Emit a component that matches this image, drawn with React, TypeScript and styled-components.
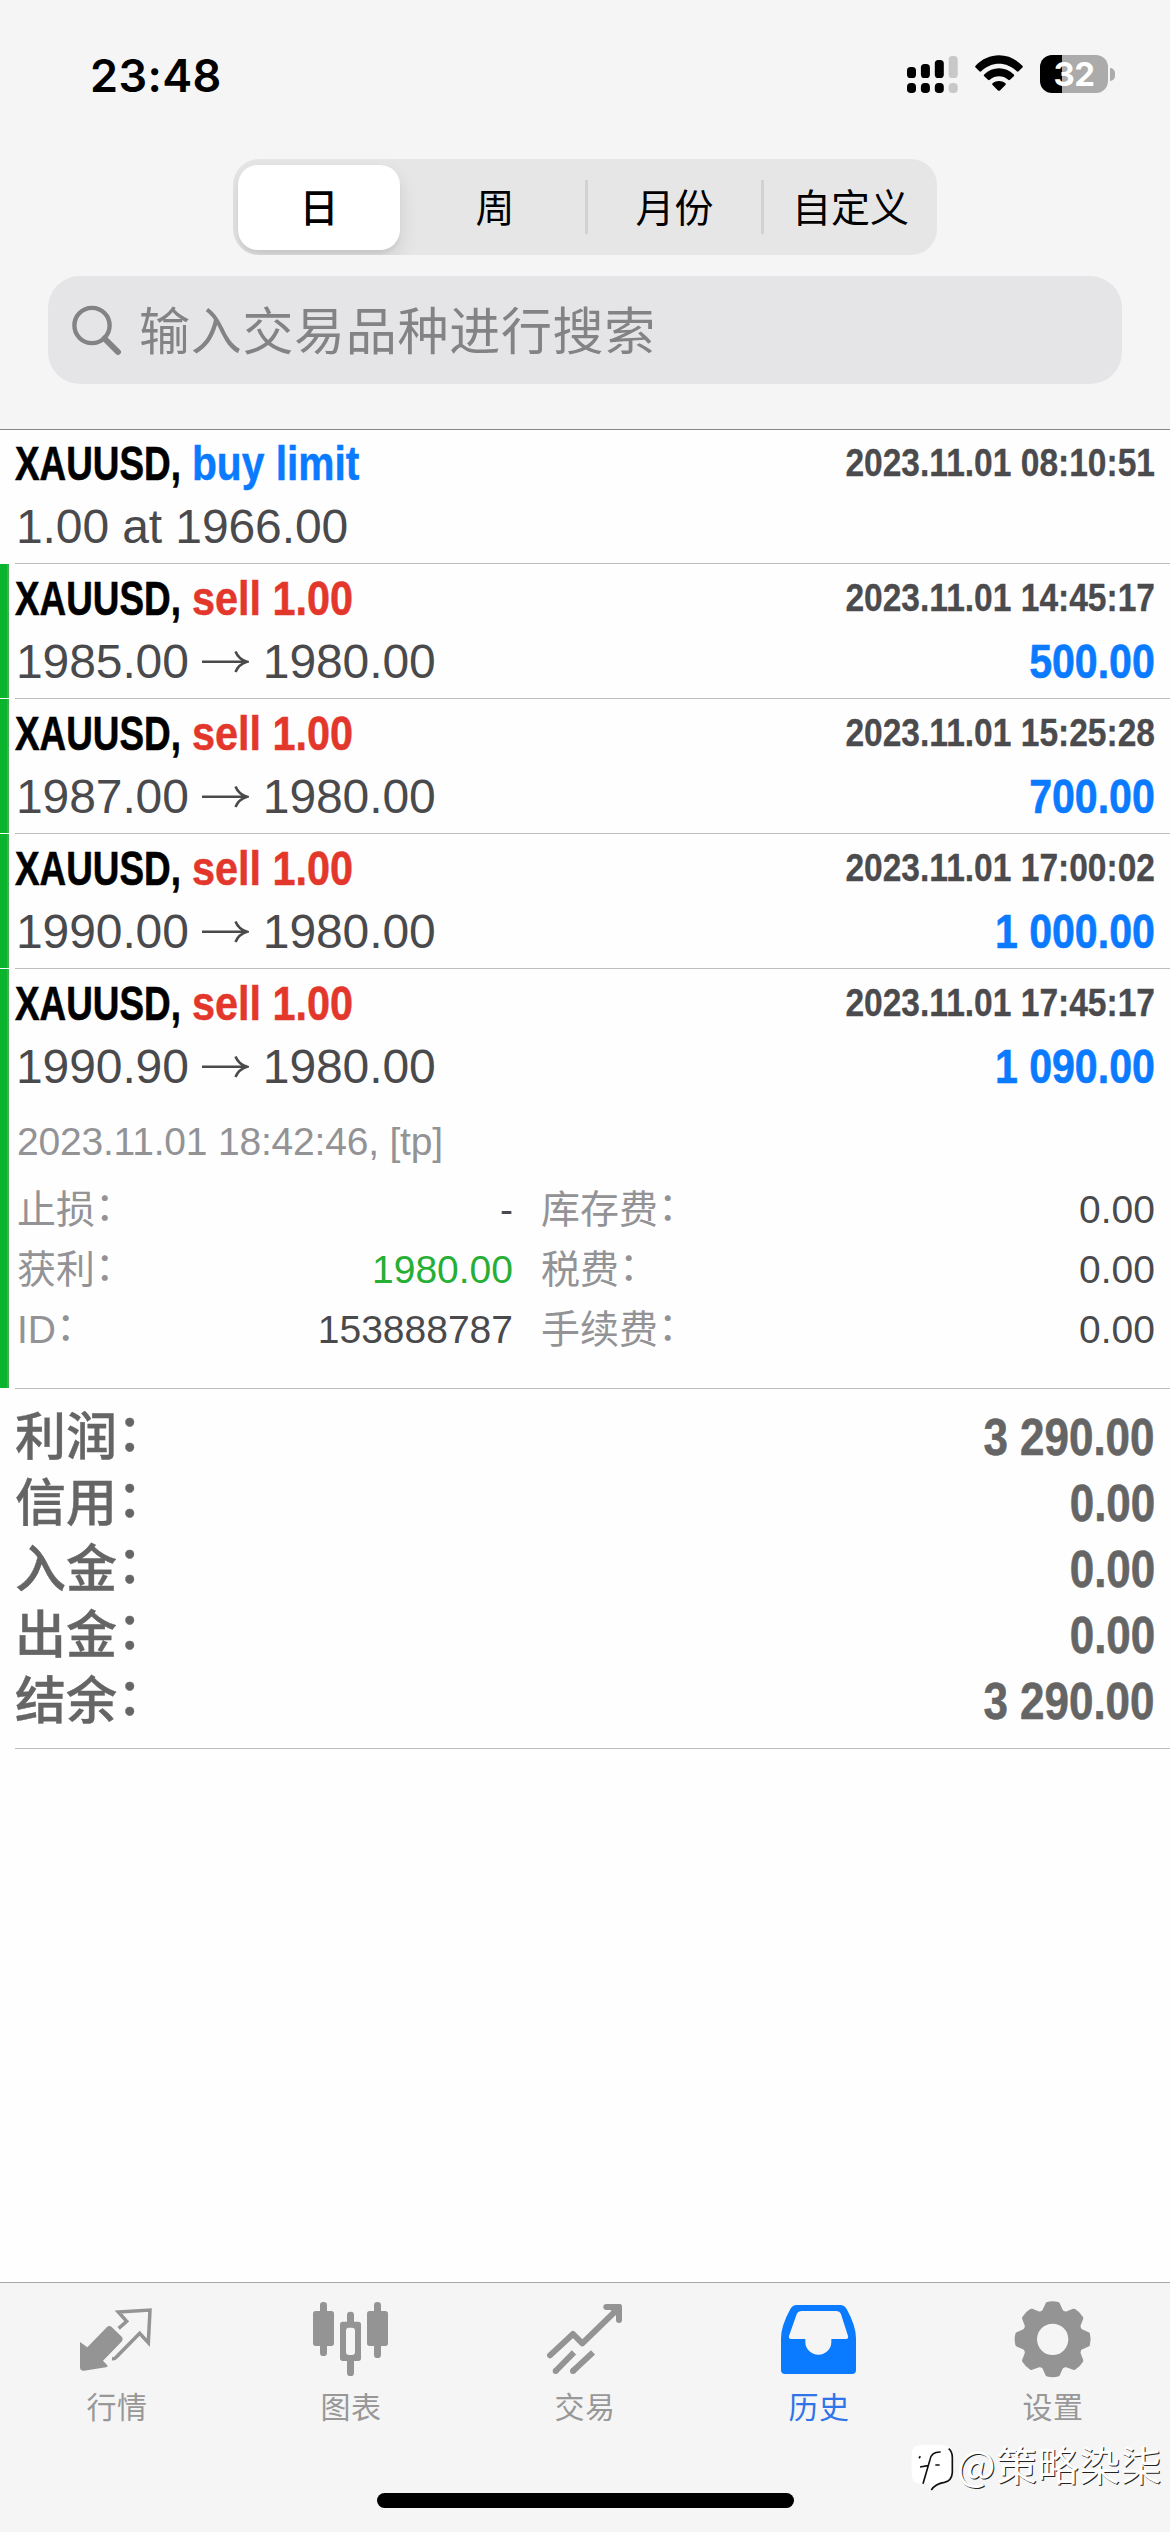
import React from "react";
import styled, { createGlobalStyle } from "styled-components";

const latin = '"Liberation Sans", "Noto Sans CJK SC", sans-serif';
const cjk = '"Noto Sans CJK SC", sans-serif';
const ui = 'Inter, "Liberation Sans", sans-serif';

const GlobalStyle = createGlobalStyle`
  body { margin: 0; background: #fff; }
  * { box-sizing: border-box; }
`;

const Screen = styled.div`
  position: relative;
  display: flex;
  flex-direction: column;
  width: 1170px;
  height: 2532px;
  overflow: hidden;
  background: #fefefe;
  font-family: ${latin};
`;

/* ---------- header ---------- */

const Header = styled.header`
  display: flex;
  flex-direction: column;
  align-items: center;
  height: 430px;
  background: #f5f5f5;
  border-bottom: 1px solid #88888a;
`;

const StatusBar = styled.div`
  display: flex;
  justify-content: space-between;
  width: 100%;
  height: 159px;
  padding: 53px 55px 0 90px;
`;

const Clock = styled.div`
  font: 600 45px/46px ${ui};
  letter-spacing: 0.4px;
  color: #000;
`;

const StatusIcons = styled.div`
  display: flex;
  align-items: flex-start;
  padding-top: 2px;
`;

const SignalSvg = styled.svg`
  width: 52px;
  height: 38px;
  margin-right: 16px;
`;

const WifiSvg = styled.svg`
  width: 48px;
  height: 38px;
  margin-right: 17px;
`;

const Battery = styled.div`
  display: flex;
  align-items: center;
  justify-content: center;
  width: 68px;
  height: 38px;
  border-radius: 12px;
  background: linear-gradient(to right, #000 22px, #ababab 22px);
  font: 700 33px/38px ${ui};
  letter-spacing: -0.5px;
  color: #fff;
`;

const BatteryCap = styled.div`
  width: 5px;
  height: 13px;
  margin: 13px 0 0 2px;
  border-radius: 0 5px 5px 0;
  background: #ababab;
`;

const Segments = styled.div`
  display: grid;
  grid-template-columns: 172px 180px 176px 176px;
  align-items: center;
  width: 704px;
  height: 96px;
  margin-bottom: 21px;
  border-radius: 26px;
  background: #e6e6e6;
  overflow: hidden;
`;

const Segment = styled.div<{ $selected?: boolean; $divided?: boolean }>`
  display: flex;
  align-items: center;
  justify-content: center;
  height: ${(p) => (p.$selected ? 85 : 54)}px;
  margin: 0 ${(p) => (p.$selected ? 5 : 0)}px;
  padding-bottom: 5px;
  border-radius: ${(p) => (p.$selected ? "20px" : "0")};
  border-left: ${(p) => (p.$divided ? "3px solid #d2d2d4" : "0")};
  background: ${(p) => (p.$selected ? "#fff" : "transparent")};
  box-shadow: ${(p) => (p.$selected ? "0 9px 20px rgba(0,0,0,.11), 0 4px 3px rgba(0,0,0,.04)" : "none")};
  font: ${(p) => (p.$selected ? 500 : 400)} 39px/50px ${cjk};
  color: #000;
`;

const SearchBar = styled.div`
  display: flex;
  align-items: center;
  width: 1074px;
  height: 108px;
  padding: 0 24px;
  border-radius: 32px;
  background: #e5e5e8;
`;

const SearchSvg = styled.svg`
  width: 50px;
  height: 58px;
  margin-right: 17px;
`;

const Placeholder = styled.span`
  padding-bottom: 5px;
  font: 400 51px/70px ${cjk};
  letter-spacing: 0.7px;
  color: #838386;
`;

/* ---------- deals ---------- */

const Deal = styled.section<{ $height: number }>`
  display: flex;
  flex-shrink: 0;
  height: ${(p) => p.$height}px;
`;

const DealBar = styled.div<{ $closed?: boolean }>`
  width: 9px;
  margin: 0 6px 1px 0;
  background: ${(p) => (p.$closed ? "linear-gradient(to right, #0ab52d 7px, #3fb04f 7px)" : "transparent")};
`;

const DealBody = styled.div<{ $top: number }>`
  flex: 1;
  padding-top: ${(p) => p.$top}px;
  border-bottom: 1px solid #bdbdc0;
`;

const DealLine = styled.div`
  display: flex;
  align-items: flex-start;
  height: 63px;
  padding-right: 15px;
`;

const Condensed = styled.span<{ $scale: number; $right?: boolean }>`
  display: inline-block;
  transform: scaleX(${(p) => p.$scale});
  transform-origin: ${(p) => (p.$right ? "right" : "left")} center;
  white-space: pre;
  font-weight: 700;
`;

const Symbol = styled(Condensed)`
  width: 177px;
  font-size: 48px;
  line-height: 63px;
  color: #000;
  -webkit-text-stroke: 0.6px #000;
`;

const Action = styled(Condensed)<{ $kind: string }>`
  font-size: 48px;
  line-height: 63px;
  color: ${(p) => (p.$kind === "buy" ? "#0a7aff" : "#e3372c")};
  -webkit-text-stroke: 0.5px ${(p) => (p.$kind === "buy" ? "#0a7aff" : "#e3372c")};
`;

const OpenTime = styled(Condensed)`
  margin-left: auto;
  font-size: 39px;
  line-height: 61px;
  color: #4b4b4e;
  -webkit-text-stroke: 0.3px #4b4b4e;
`;

const Price = styled.span`
  display: flex;
  align-items: center;
  padding-left: 1px;
  font-size: 48px;
  line-height: 63px;
  letter-spacing: -0.1px;
  white-space: pre;
  color: #4a4a4d;
`;

const ArrowSvg = styled.svg`
  width: 48px;
  height: 26px;
  margin: 0 14px 0 12px;
`;

const Profit = styled(Condensed)`
  margin-left: auto;
  font-size: 48px;
  line-height: 63px;
  color: #0a7aff;
  -webkit-text-stroke: 0.6px #0a7aff;
`;

const CloseInfo = styled.div`
  margin: 14px 0 8px 2px;
  font-size: 39px;
  line-height: 60px;
  letter-spacing: -0.2px;
  color: #939396;
`;

const Details = styled.div`
  display: grid;
  grid-template-columns: 496px 1fr;
  column-gap: 28px;
  padding: 0 15px 0 2px;
`;

const Detail = styled.div`
  display: flex;
  justify-content: space-between;
  height: 60px;
  font-size: 39px;
  line-height: 60px;
`;

const DetailLabel = styled.span`
  color: #939396;
`;

const Colon = styled.span`
  display: inline-block;
  transform: translateY(-0.07em);
`;

const DetailValue = styled.span<{ $green?: boolean }>`
  color: ${(p) => (p.$green ? "#27ae35" : "#4a4a4d")};
`;

/* ---------- summary ---------- */

const Summary = styled.section`
  margin-left: 15px;
  padding: 16px 15px 13px 0;
  border-bottom: 1px solid #bdbdc0;
`;

const SummaryRow = styled.div`
  display: flex;
  justify-content: space-between;
  height: 66px;
  font-size: 51px;
  line-height: 66px;
  color: #656565;
`;

const SummaryLabel = styled.span`
  font-weight: 500;
  -webkit-text-stroke: 0.4px #656565;
`;

const SummaryValue = styled(Condensed)`
  -webkit-text-stroke: 0.6px #656565;
`;

/* ---------- tab bar ---------- */

const TabBar = styled.nav`
  display: flex;
  flex-direction: column;
  align-items: center;
  height: 250px;
  margin-top: auto;
  border-top: 1px solid #a8a8aa;
  background: #f5f5f5;
`;

const Tabs = styled.div`
  display: grid;
  grid-template-columns: repeat(5, 234px);
  height: 210px;
  padding-top: 17px;
`;

const Tab = styled.div<{ $active?: boolean }>`
  display: flex;
  flex-direction: column;
  align-items: center;
  color: ${(p) => (p.$active ? "#0a7aff" : "#949494")};
`;

const TabSvg = styled.svg`
  width: 78px;
  height: 78px;
  margin-bottom: 7px;
`;

const TabLabel = styled.span<{ $active?: boolean }>`
  font: 400 30px/40px ${cjk};
  letter-spacing: 0.6px;
  color: ${(p) => (p.$active ? "#2f74e8" : "#989898")};
`;

const HomeIndicator = styled.div`
  width: 417px;
  height: 15px;
  border-radius: 8px;
  background: #000;
`;

const Watermark = styled.div`
  position: absolute;
  right: 8px;
  bottom: 36px;
  display: flex;
  align-items: center;
  gap: 2px;
`;

const WatermarkSvg = styled.svg`
  width: 45px;
  height: 50px;
`;

const WatermarkText = styled.span`
  padding-bottom: 6px;
  font: 400 41px/54px ${cjk};
  letter-spacing: 0.5px;
  color: #fff;
  text-shadow: 1px 1px 0 #222;
`;

/* ---------- data ---------- */

const deals = [
  { action: "buy limit", kind: "buy", scale: 0.848, time: "2023.11.01 08:10:51", price: ["1.00 at 1966.00"], closed: false },
  { action: "sell 1.00", kind: "sell", scale: 0.862, time: "2023.11.01 14:45:17", price: ["1985.00", "1980.00"], profit: "500.00", closed: true },
  { action: "sell 1.00", kind: "sell", scale: 0.862, time: "2023.11.01 15:25:28", price: ["1987.00", "1980.00"], profit: "700.00", closed: true },
  { action: "sell 1.00", kind: "sell", scale: 0.862, time: "2023.11.01 17:00:02", price: ["1990.00", "1980.00"], profit: "1 000.00", closed: true },
  { action: "sell 1.00", kind: "sell", scale: 0.862, time: "2023.11.01 17:45:17", price: ["1990.90", "1980.00"], profit: "1 090.00", closed: true, expanded: true },
];

const details = [
  { label: "止损", value: "-" },
  { label: "库存费", value: "0.00" },
  { label: "获利", value: "1980.00", green: true },
  { label: "税费", value: "0.00" },
  { label: "ID", value: "153888787" },
  { label: "手续费", value: "0.00" },
];

const summary = [
  ["利润", "3 290.00"],
  ["信用", "0.00"],
  ["入金", "0.00"],
  ["出金", "0.00"],
  ["结余", "3 290.00"],
];

/* ---------- icons ---------- */

const Signal = () => (
  <SignalSvg viewBox="0 0 52 38">
    {[12, 9, 5, 1].map((top, i) => (
      <g key={top} fill={i === 3 ? "#c8c8c8" : "#000"}>
        <rect x={i * 13.9} y={top} width="9" height={23 - top} rx="3.6" />
        <rect x={i * 13.9} y="28" width="9" height="10" rx="3.8" />
      </g>
    ))}
  </SignalSvg>
);

const Wifi = () => (
  <WifiSvg viewBox="0 0 48 38">
    <path d="M0.6 10.8C13.5-3.2 34.5-3.2 47.4 10.8C48 11.5 48 12 47.4 12.6L43.6 16.2C43 16.8 42.4 16.8 41.8 16.2C31.5 6.2 16.5 6.2 6.2 16.2C5.6 16.8 5 16.8 4.4 16.2L.6 12.6C0 12 0 11.5 .6 10.8Z" />
    <path d="M9.2 19.4C17.5 11.2 30.5 11.2 38.8 19.4C39.4 20 39.4 20.6 38.8 21.2L35 24.8C34.4 25.4 33.8 25.4 33.2 24.8C27.8 20.2 20.2 20.2 14.8 24.8C14.2 25.4 13.6 25.4 13 24.8L9.2 21.2C8.6 20.6 8.6 20 9.2 19.4Z" />
    <path d="M17.6 28.2C21.3 25.2 26.7 25.2 30.4 28.2C31 28.8 31 29.4 30.4 30L25 35.4C24.4 36 23.6 36 23 35.4L17.6 30C17 29.4 17 28.8 17.6 28.2Z" />
  </WifiSvg>
);

const Arrow = () => (
  <ArrowSvg viewBox="0 0 48 26" fill="none" stroke="#4a4a4d" strokeWidth="2.6">
    <path d="M1 12.8H45M34.5 2.5C36.5 7.5 40 11 46 12.8C40 14.6 36.5 18.1 34.5 23.1" />
  </ArrowSvg>
);

const QuotesIcon = () => (
  <TabSvg viewBox="234 120 234 234" fill="currentColor">
    <path d="M240 246L262 262L321 201Q328 195 335 201L366 231Q371 238 366 244L309 302L323 317Q323 321 318 322L252 332Q240 333 240 322Z" />
    <path d="M356 205L380 184L355 156L450 150L445 248L419 220L350 290Q345 297 336 296" fill="none" stroke="currentColor" strokeWidth="10.5" />
  </TabSvg>
);

const ChartIcon = () => (
  <TabSvg viewBox="936 120 234 234" fill="currentColor">
    <rect x="960" y="126" width="21" height="162" rx="10" />
    <rect x="939" y="153" width="63" height="105" rx="8" />
    <rect x="1122" y="126" width="21" height="168" rx="10" />
    <rect x="1101" y="153" width="63" height="105" rx="8" />
    <rect x="1041" y="155" width="21" height="45" rx="10" />
    <rect x="1041" y="290" width="21" height="58" rx="10" />
    <rect x="1020" y="185" width="63" height="118" rx="8" />
    <rect x="1038" y="203" width="27" height="82" rx="9" fill="#f5f5f5" />
  </TabSvg>
);

const TradeIcon = () => (
  <TabSvg viewBox="438 120 234 234" fill="none" stroke="currentColor" strokeWidth="18" strokeLinejoin="round">
    <path d="M450 286L519 222L547 250L650 150" strokeLinecap="round" />
    <path d="M619 141H657V180" strokeLinecap="round" />
    <path d="M636 141H657V163Z" fill="currentColor" />
    <path d="M467 333L522 277M519 333L579 277" />
    <g fill="currentColor" stroke="none">
      <circle cx="467" cy="333" r="9" />
      <circle cx="519" cy="333" r="9" />
    </g>
  </TabSvg>
);

const HistoryIcon = () => (
  <TabSvg viewBox="30 120 234 234" fill="currentColor">
    <path
      fillRule="evenodd"
      d="M80 135H211Q223 135 230 147Q258 198 258 235V330Q258 342 246 342H45Q33 342 33 330V235Q33 198 61 147Q68 135 80 135ZM96 153Q84 153 80 163L57 228Q55 237 64 237H106V246A39 38 0 0 0 184 246V237H228Q236 237 234 228L213 163Q209 153 198 153Z"
    />
  </TabSvg>
);

const SettingsIcon = () => (
  <TabSvg viewBox="732 120 234 234">
    <g transform="translate(848 238)" fill="currentColor" stroke="currentColor" strokeLinejoin="round">
      <circle r="68" fill="none" strokeWidth="42" />
      {[0, 45, 90, 135, 180, 225, 270, 315].map((a) => (
        <path key={a} transform={`rotate(${a})`} d="M-15 -105Q0 -109 15 -105L24 -85Q27 -80 33 -77L20 -70H-20L-33 -77Q-27 -80 -24 -85Z" strokeWidth="14" />
      ))}
    </g>
  </TabSvg>
);

const tabs = [
  { label: "行情", Icon: QuotesIcon },
  { label: "图表", Icon: ChartIcon },
  { label: "交易", Icon: TradeIcon },
  { label: "历史", Icon: HistoryIcon, active: true },
  { label: "设置", Icon: SettingsIcon },
];

export default function App() {
  return (
    <Screen>
      <GlobalStyle />
      <Header>
        <StatusBar>
          <Clock>23:48</Clock>
          <StatusIcons>
            <Signal />
            <Wifi />
            <Battery>32</Battery>
            <BatteryCap />
          </StatusIcons>
        </StatusBar>
        <Segments>
          <Segment $selected>日</Segment>
          <Segment>周</Segment>
          <Segment $divided>月份</Segment>
          <Segment $divided>自定义</Segment>
        </Segments>
        <SearchBar>
          <SearchSvg viewBox="0 0 50 58" fill="none" stroke="#838386">
            <circle cx="20" cy="24.5" r="17.6" strokeWidth="4.4" />
            <path d="M32.5 37.5L46 51" strokeWidth="6" strokeLinecap="round" />
          </SearchSvg>
          <Placeholder>输入交易品种进行搜索</Placeholder>
        </SearchBar>
      </Header>

      {deals.map((d, i) => (
        <Deal key={d.time} $height={d.expanded ? 420 : i === 0 ? 134 : 135}>
          <DealBar $closed={d.closed} />
          <DealBody $top={i === 0 ? 2 : 3}>
            <DealLine>
              <Symbol $scale={0.768}>XAUUSD,</Symbol>
              <Action $scale={d.scale} $kind={d.kind}>{d.action}</Action>
              <OpenTime $scale={0.86} $right>{d.time}</OpenTime>
            </DealLine>
            <DealLine>
              <Price>
                {d.price[0]}
                {d.price[1] && <Arrow />}
                {d.price[1]}
              </Price>
              {d.profit && <Profit $scale={0.856} $right>{d.profit}</Profit>}
            </DealLine>
            {d.expanded && (
              <>
                <CloseInfo>2023.11.01 18:42:46, [tp]</CloseInfo>
                <Details>
                  {details.map((x) => (
                    <Detail key={x.label}>
                      <DetailLabel>{x.label}<Colon>：</Colon></DetailLabel>
                      <DetailValue $green={x.green}>{x.value}</DetailValue>
                    </Detail>
                  ))}
                </Details>
              </>
            )}
          </DealBody>
        </Deal>
      ))}

      <Summary>
        {summary.map(([label, value]) => (
          <SummaryRow key={label}>
            <SummaryLabel>{label}<Colon>：</Colon></SummaryLabel>
            <SummaryValue $scale={0.862} $right>{value}</SummaryValue>
          </SummaryRow>
        ))}
      </Summary>

      <TabBar>
        <Tabs>
          {tabs.map(({ label, Icon, active }) => (
            <Tab key={label} $active={active}>
              <Icon />
              <TabLabel $active={active}>{label}</TabLabel>
            </Tab>
          ))}
        </Tabs>
        <HomeIndicator />
      </TabBar>

      <Watermark>
        <WatermarkSvg viewBox="410 550 135 150">
          <path d="M440 562H510Q537 564 537 595V645Q535 672 510 674Q488 676 474 697Q470 680 462 678H440Q415 676 415 650V590Q415 564 440 562Z" fill="#fff" />
          <path d="M526 573Q537 582 537 600V645Q535 670 513 674Q486 678 474 697M502 583Q474 582 470 606L449 678M440 628L464 624M486 622H499M437 602L441 596" fill="none" stroke="#111" strokeWidth="5" />
        </WatermarkSvg>
        <WatermarkText>@策略染柒</WatermarkText>
      </Watermark>
    </Screen>
  );
}
